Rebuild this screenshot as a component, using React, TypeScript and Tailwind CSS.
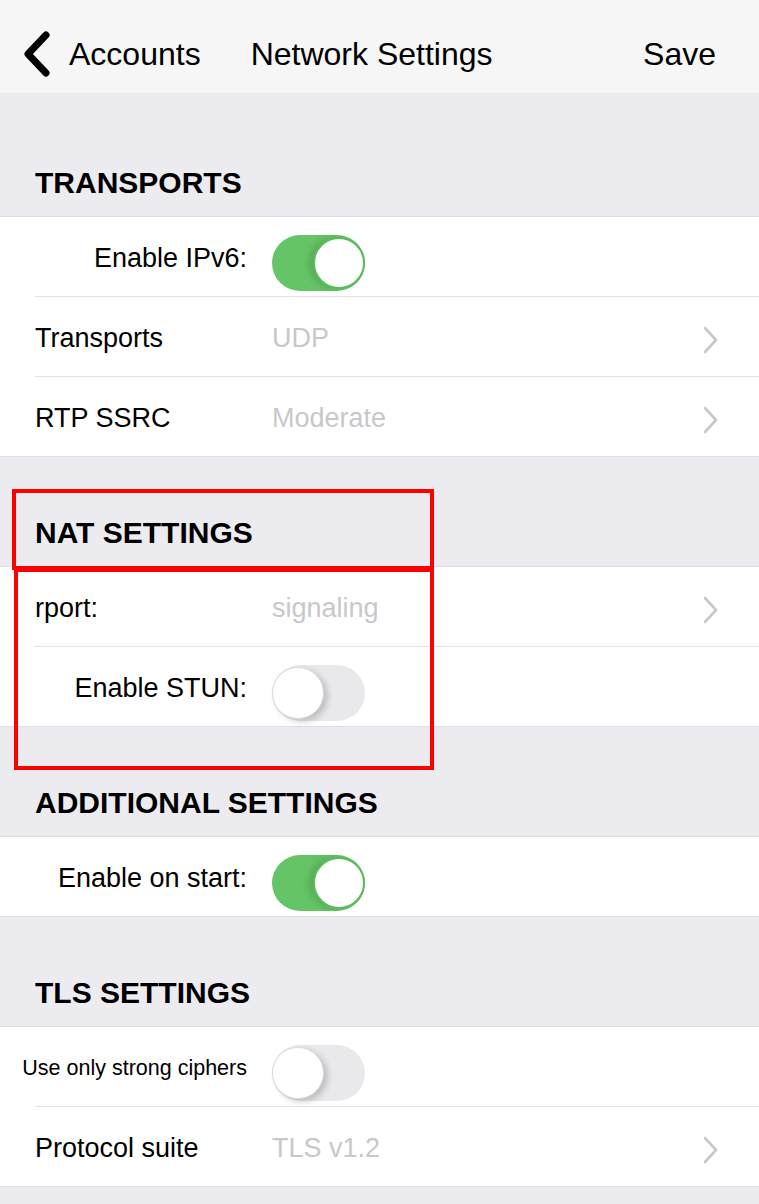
import React from 'react';

const font = { fontFamily: '"Liberation Sans", Arial, sans-serif' };

function Toggle({ on }: { on: boolean }) {
  if (on) {
    return (
      <div className="relative h-[56px] w-[93px] rounded-full bg-[#65c466]">
        <div className="absolute right-0 top-[2px] h-[52px] w-[52px] rounded-full border-2 border-[#5cbb5e] bg-white shadow-[-5px_0_6px_rgba(0,0,0,0.12)]" />
      </div>
    );
  }
  return (
    <div className="relative h-[56px] w-[93px] rounded-full bg-[#e9e9eb]">
      <div className="absolute left-0 top-[2px] h-[52px] w-[52px] rounded-full border border-[#dcdcdc] bg-white shadow-[4px_3px_6px_rgba(0,0,0,0.18)]" />
    </div>
  );
}

function Chevron() {
  return (
    <svg width="16" height="28" viewBox="0 0 16 28" className="mr-[41px] mt-[2px]">
      <polyline points="3,2 14,14 3,26" fill="none" stroke="#c7c7cc" strokeWidth="2.6" strokeLinecap="round" strokeLinejoin="round" />
    </svg>
  );
}

type Row =
  | { kind: 'switch'; label: string; on: boolean; small?: boolean }
  | { kind: 'link'; label: string; value: string };

function SettingRow({ row, last }: { row: Row; last: boolean }) {
  return (
    <div className={`pl-[35px] ${last ? 'border-b border-[#dedee2]' : ''}`}>
      <div className={`flex items-center pt-[4px] ${last ? 'h-[79px]' : 'h-[80px] border-b border-[#e2e2e4]'}`}>
        {row.kind === 'switch' ? (
          <>
            <div className="flex w-[212px] justify-end">
              <span className={`whitespace-nowrap text-black ${row.small ? 'text-[21.5px]' : 'text-[27px]'}`}>{row.label}</span>
            </div>
            <div className="ml-[25px] mt-[8px]">
              <Toggle on={row.on} />
            </div>
          </>
        ) : (
          <>
            <div className="w-[212px] whitespace-nowrap text-[27px] text-black">{row.label}</div>
            <div className="ml-[25px] flex-1 text-[27px] text-[#c8c8cc]">{row.value}</div>
            <Chevron />
          </>
        )}
      </div>
    </div>
  );
}

function Section({ title, rows, first }: { title: string; rows: Row[]; first?: boolean }) {
  return (
    <div>
      <div className={`flex items-end border-b border-[#dedee2] pb-[18px] pl-[35px] ${first ? 'h-[124px]' : 'h-[110px]'}`}>
        <h2 className="text-[30px] font-semibold leading-[30px] text-black">{title}</h2>
      </div>
      <div className="bg-white">
        {rows.map((r, i) => (
          <SettingRow key={r.label} row={r} last={i === rows.length - 1} />
        ))}
      </div>
    </div>
  );
}

export default function App() {
  return (
    <div className="relative min-h-[1204px] overflow-hidden bg-[#ebebf0]" style={font}>
      <header className="flex h-[93px] items-center bg-[#f6f6f6] pt-[14px]">
        <svg width="30" height="46" viewBox="0 0 30 46" className="ml-[21px]">
          <polyline points="25,4 7,23 25,42" fill="none" stroke="#000" strokeWidth="7" strokeLinecap="round" strokeLinejoin="round" />
        </svg>
        <span className="ml-[18px] text-[32px] text-black">Accounts</span>
        <span className="ml-[50px] text-[32px] text-black">Network Settings</span>
        <span className="ml-auto mr-[43px] text-[32px] text-black">Save</span>
      </header>

      <Section
        first
        title="TRANSPORTS"
        rows={[
          { kind: 'switch', label: 'Enable IPv6:', on: true },
          { kind: 'link', label: 'Transports', value: 'UDP' },
          { kind: 'link', label: 'RTP SSRC', value: 'Moderate' },
        ]}
      />
      <Section
        title="NAT SETTINGS"
        rows={[
          { kind: 'link', label: 'rport:', value: 'signaling' },
          { kind: 'switch', label: 'Enable STUN:', on: false },
        ]}
      />
      <Section title="ADDITIONAL SETTINGS" rows={[{ kind: 'switch', label: 'Enable on start:', on: true }]} />
      <Section
        title="TLS SETTINGS"
        rows={[
          { kind: 'switch', label: 'Use only strong ciphers', on: false, small: true },
          { kind: 'link', label: 'Protocol suite', value: 'TLS v1.2' },
        ]}
      />

      {/* annotation boxes */}
      <div className="pointer-events-none absolute left-[12px] top-[489px] h-[81px] w-[422px] border-4 border-[#ff0000]" />
      <div className="pointer-events-none absolute left-[14px] top-[568px] h-[202px] w-[420px] border-4 border-[#ff0000]" />
    </div>
  );
}
